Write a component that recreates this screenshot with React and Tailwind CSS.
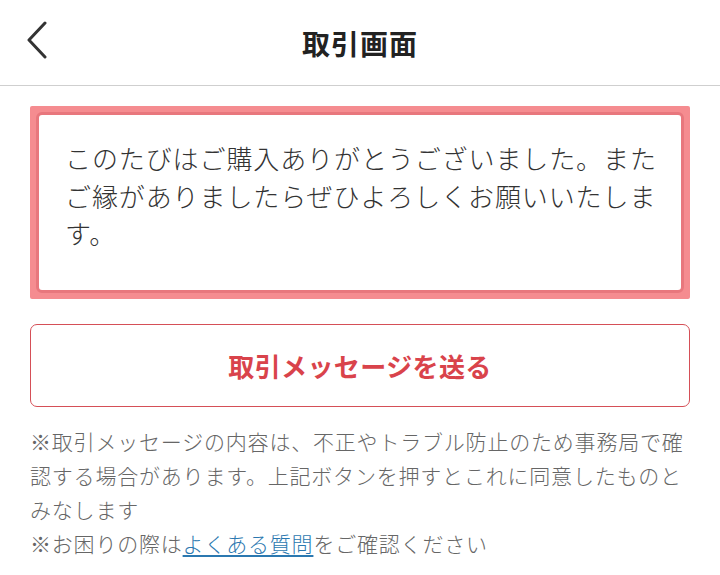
import React from 'react';

const jp = { fontFamily: '"Noto Sans CJK JP", "Noto Sans", sans-serif' };

export default function App() {
    return (
        <div className="w-[720px] h-[575px] bg-white overflow-hidden" style={jp}>
            {/* Header */}
            <header className="relative h-[86px] flex items-center justify-center border-b border-[#cfcfcf]">
                <button className="absolute left-[24px] top-[20px] w-[26px] h-[40px] flex items-center justify-center">
                    <svg width="22" height="38" viewBox="0 0 22 38" fill="none">
                        <path d="M19 2 L3 19 L19 36" stroke="#333" strokeWidth="3" strokeLinecap="round" strokeLinejoin="round" />
                    </svg>
                </button>
                <h1 className="text-[28px] font-bold text-[#222] tracking-[1px] leading-none">取引画面</h1>
            </header>

            <main className="px-[30px] pt-[20px]">
                {/* Message box (focused) */}
                <div className="bg-[#f58c90] p-[6px] rounded-[2px]">
                    <div className="h-[181px] bg-white rounded-[6px] border-[3px] border-[#e8777d] pl-[26px] pr-[16px] pt-[24px]">
                        <p className="text-[26px] leading-[37.5px] tracking-[0.9px] font-light text-[#333]">
                            このたびはご購入ありがとうございました。またご縁がありましたらぜひよろしくお願いいたします。
                        </p>
                    </div>
                </div>

                {/* Send button */}
                <button className="mt-[25px] w-full h-[83px] rounded-[7px] border-[1.5px] border-[#d54f57] flex items-center justify-center">
                    <span className="text-[26px] font-bold text-[#d9434b] tracking-[0.4px]">取引メッセージを送る</span>
                </button>

                {/* Notes */}
                <div className="mt-[17px] text-[21px] leading-[34px] tracking-[0.8px] font-light text-[#666]">
                    <p>※取引メッセージの内容は、不正やトラブル防止のため事務局で確認する場合があります。上記ボタンを押すとこれに同意したものとみなします</p>
                    <p>
                        ※お困りの際は
                        <a className="text-[#2b78b0] underline underline-offset-[3px]">よくある質問</a>
                        をご確認ください
                    </p>
                </div>
            </main>
        </div>
    );
}
